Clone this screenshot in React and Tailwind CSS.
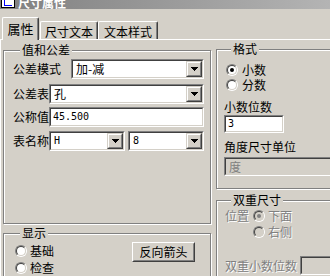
import React from 'react';

const sunkenOuter = 'border border-t-[#808080] border-l-[#808080] border-b-white border-r-white';
const sunkenInner = 'border border-t-[#404040] border-l-[#404040] border-b-[#d4d0c8] border-r-[#d4d0c8]';
const etched = 'relative shrink-0 border border-[#808080] shadow-[inset_1px_1px_0_#fff,1px_1px_0_#fff]';
const mono = "font-['DejaVu_Sans_Mono',monospace] text-[10px]";

const Arrow = ({ color = '#000' }) => (
  <svg width="7" height="4" viewBox="0 0 7 4" shapeRendering="crispEdges">
    <path d="M0 0h7v1H0zM1 1h5v1H1zM2 2h3v1H2zM3 3h1v1H3z" fill={color} />
  </svg>
);

const Combo = ({ value, className = '', ascii = false, disabled = false }) => (
  <div className={`${sunkenOuter} shrink-0 ${className}`}>
    <div className={`${sunkenInner} h-full flex items-center ${disabled ? 'bg-[#d4d0c8]' : 'bg-white'}`}>
      <span className={`flex-1 pl-[3px] ${ascii ? mono : ''} ${disabled ? 'text-[#808080]' : ''}`}>{value}</span>
      {!disabled && (
        <div className="w-[16px] h-[16px] border border-t-[#d4d0c8] border-l-[#d4d0c8] border-b-[#404040] border-r-[#404040]">
          <div className="w-full h-full border border-t-white border-l-white border-b-[#808080] border-r-[#808080] bg-[#d4d0c8] flex items-center justify-center">
            <Arrow />
          </div>
        </div>
      )}
    </div>
  </div>
);

const Input = ({ value, className = '' }) => (
  <div className={`${sunkenOuter} shrink-0 ${className}`}>
    <div className={`${sunkenInner} h-full flex items-center bg-white`}>
      <span className={`pl-[2px] ${mono}`}>{value}</span>
    </div>
  </div>
);

const Radio = ({ checked, disabled }) => (
  <div className="w-[12px] h-[12px] rounded-full border border-t-[#808080] border-l-[#808080] border-b-white border-r-white shrink-0">
    <div className={`w-full h-full rounded-full border border-t-[#404040] border-l-[#404040] border-b-[#d4d0c8] border-r-[#d4d0c8] flex items-center justify-center ${disabled ? 'bg-[#d4d0c8]' : 'bg-white'}`}>
      {checked && <div className={`w-[4px] h-[4px] rounded-full ${disabled ? 'bg-[#808080]' : 'bg-black'}`} />}
    </div>
  </div>
);

const Dim = ({ children, className = '' }) => (
  <span className={`text-[#808080] [text-shadow:1px_1px_0_#fff] ${className}`}>{children}</span>
);

// group caption sits on top of the etched line
const Caption = ({ children, left }) => (
  <span className={`absolute top-[-8px] ${left} px-[2px] bg-[#d4d0c8] leading-[14px]`}>{children}</span>
);

export default function App() {
  return (
    <div className="w-[330px] h-[276px] overflow-hidden bg-[#d4d0c8] text-black text-[12px] leading-[14px] font-['Noto_Sans_CJK_SC','Noto_Sans',sans-serif]">
      {/* title bar, mostly cut off */}
      <div className="h-[9px] overflow-hidden flex items-end bg-gradient-to-r from-[#808080] to-[#b4b4b4]">
        <div className="w-[14px] h-[14px] ml-[1px] mb-[1px] bg-white border border-black relative shrink-0">
          <div className="absolute left-[2px] bottom-[1px] w-[1px] h-[6px] bg-[#0000ff]" />
          <div className="absolute left-[2px] bottom-[1px] w-[8px] h-[1px] bg-[#0000ff]" />
        </div>
        <span className="ml-[3px] font-bold text-white text-[12px] leading-[16px] mb-[-2px]">尺寸属性</span>
      </div>

      {/* tabs */}
      <div className="h-[30px] flex items-end pl-[2px]">
        <div className="relative z-10 mb-[-1px] w-[37px] h-[23px] bg-[#d4d0c8] border-t border-l border-white border-r border-r-[#404040] rounded-t-[2px] shadow-[inset_-1px_0_0_#808080] flex items-start justify-center pt-[4px] text-[13px]">
          属性
        </div>
        <div className="ml-[1px] w-[58px] h-[18px] bg-[#d4d0c8] border-t border-l border-white border-r border-r-[#404040] rounded-t-[2px] shadow-[inset_-1px_0_0_#808080] flex items-start justify-center pt-[3px]">
          尺寸文本
        </div>
        <div className="w-[60px] h-[18px] bg-[#d4d0c8] border-t border-l border-white border-r border-r-[#404040] rounded-t-[2px] shadow-[inset_-1px_0_0_#808080] flex items-start justify-center pt-[3px]">
          文本样式
        </div>
      </div>

      {/* panel */}
      <div className="h-[240px] border-t border-l border-white flex">
        {/* left column */}
        <div className="ml-[2px] flex flex-col">
          <div className={`${etched} mt-[10px] w-[208px] h-[174px]`}>
            <Caption left="left-[16px]">值和公差</Caption>
            <div className="pl-[9px] flex flex-col">
              <div className="mt-[8px] flex items-center h-[20px]">
                <span className="w-[58px]">公差模式</span>
                <Combo value="加-减" className="w-[133px] h-[20px]" />
              </div>
              <div className="mt-[5px] flex items-center h-[20px]">
                <span className="w-[36px]">公差表</span>
                <Combo value="孔" className="w-[155px] h-[20px]" />
              </div>
              <div className="mt-[3px] flex items-center h-[20px]">
                <span className="w-[36px]">公称值</span>
                <Input value="45.500" className="w-[155px] h-[20px]" />
              </div>
              <div className="mt-[4px] flex items-center h-[20px]">
                <span className="w-[36px]">表名称</span>
                <Combo value="H" ascii className="w-[76px] h-[20px]" />
                <Combo value="8" ascii className="w-[76px] h-[20px] ml-[3px]" />
              </div>
            </div>
          </div>

          <div className={`${etched} mt-[9px] w-[208px] h-[70px]`}>
            <Caption left="left-[16px]">显示</Caption>
            <div className="flex items-start pl-[11px]">
              <div className="w-[117px] pt-[10px] flex flex-col">
                <div className="h-[14px] flex items-center gap-[3px]">
                  <Radio />
                  <span>基础</span>
                </div>
                <div className="mt-[3px] h-[14px] flex items-center gap-[3px]">
                  <Radio />
                  <span>检查</span>
                </div>
              </div>
              <div className="mt-[8px] w-[63px] h-[20px] border border-t-white border-l-white border-b-[#404040] border-r-[#404040]">
                <div className="w-full h-full border border-transparent border-b-[#808080] border-r-[#808080] flex items-center justify-center">
                  反向箭头
                </div>
              </div>
            </div>
          </div>
        </div>

        {/* right column */}
        <div className="ml-[5px] flex flex-col">
          <div className={`${etched} mt-[9px] w-[130px] h-[140px]`}>
            <Caption left="left-[14px]">格式</Caption>
            <div className="pl-[7px] flex flex-col">
              <div className="mt-[13px] ml-[2px] h-[14px] flex items-center gap-[4px]">
                <Radio checked />
                <span>小数</span>
              </div>
              <div className="mt-[1px] ml-[2px] h-[14px] flex items-center gap-[4px]">
                <Radio />
                <span>分数</span>
              </div>
              <span className="mt-[8px]">小数位数</span>
              <Input value="3" className="mt-[1px] w-[60px] h-[18px]" />
              <span className="mt-[7px]">角度尺寸单位</span>
              <Combo value="度" disabled className="mt-[3px] w-[120px] h-[19px]" />
            </div>
          </div>

          <div className={`${etched} mt-[11px] w-[130px] h-[90px]`}>
            <Caption left="left-[14px]">双重尺寸</Caption>
            <div className="pl-[8px] flex flex-col">
              <div className="mt-[8px] h-[14px] flex items-center">
                <Dim className="w-[28px]">位置</Dim>
                <Radio checked disabled />
                <Dim className="ml-[3px]">下面</Dim>
              </div>
              <div className="mt-[2px] h-[14px] flex items-center">
                <div className="ml-[28px]"><Radio disabled /></div>
                <Dim className="ml-[3px]">右侧</Dim>
              </div>
              <div className="mt-[17px] flex items-center">
                <Dim className="w-[75px]">双重小数位数</Dim>
                <div className={`${sunkenOuter} w-[40px] h-[19px]`}>
                  <div className={`${sunkenInner} h-full bg-[#d4d0c8]`} />
                </div>
              </div>
            </div>
          </div>
        </div>
      </div>
    </div>
  );
}
